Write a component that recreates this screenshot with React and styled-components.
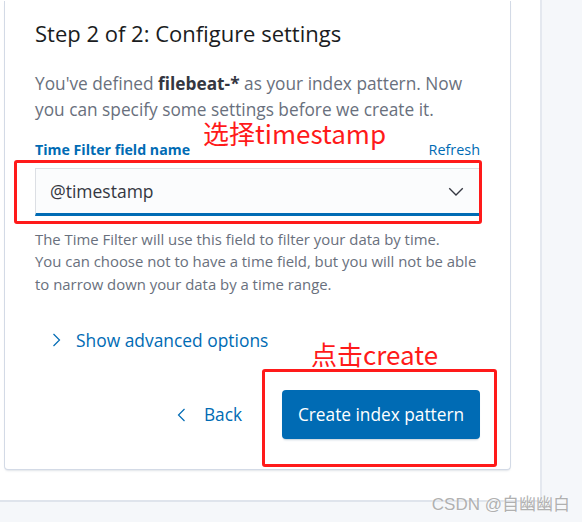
import React from "react";
import styled, { createGlobalStyle } from "styled-components";

const GlobalStyle = createGlobalStyle`
  html, body { margin: 0; padding: 0; }
  body {
    background: #f5f7fa;
    font-family: "Open Sans", "Noto Sans", sans-serif;
    -webkit-font-smoothing: antialiased;
  }
`;

const Page = styled.div`
  position: relative;
  width: 582px;
  height: 522px;
  overflow: hidden;
  background: #f5f7fa;
`;

const Panel = styled.div`
  width: 542px;
  height: 502px;
  box-sizing: border-box;
  background: #ffffff;
  border-right: 2px solid #e4e8ef;
  border-bottom: 2px solid #dfe4ec;
  padding: 0 31px 30px 4px;
  display: flex;
  flex-direction: column;
  justify-content: flex-end;
`;

const Card = styled.div`
  width: 507px;
  box-sizing: border-box;
  background: #fff;
  border: 1px solid #d3dae6;
  border-top: none;
  border-radius: 0 0 4px 4px;
  box-shadow: 0 2px 2px -1px rgba(152, 162, 179, 0.3);
  padding: 14px 30px 30px 30px;
  display: flex;
  flex-direction: column;
`;

const Title = styled.h2`
  margin: 0;
  font-size: 22px;
  line-height: 36px;
  font-weight: 500;
  color: #1a1c21;
`;

const Lead = styled.p`
  margin: 20px 0 0;
  font-size: 17.3px;
  line-height: 26px;
  color: #69707d;
  strong { color: #343741; font-weight: 700; }
`;

const LabelRow = styled.div`
  margin-top: 14px;
  display: flex;
  justify-content: space-between;
  align-items: baseline;
  height: 26px;
`;

const Label = styled.label`
  font-size: 14.2px;
  font-weight: 700;
  color: #006bb4;
  line-height: 26px;
`;

const LinkText = styled.span`
  font-size: 14.4px;
  color: #006bb4;
  line-height: 26px;
`;

const Select = styled.div`
  margin-top: 5px;
  height: 48px;
  box-sizing: border-box;
  background: #fbfcfd;
  border: 1px solid #dcdfe4;
  border-bottom: 3px solid #006bb4;
  display: flex;
  align-items: center;
  justify-content: space-between;
  padding: 0 14px 0 14px;
  font-size: 17.5px;
  color: #343741;
`;

const Help = styled.p`
  margin: 12px 0 0;
  font-size: 14.9px;
  line-height: 22.5px;
  color: #69707d;
`;

const Toggle = styled.div`
  margin: 32px 0 0 13px;
  display: flex;
  align-items: center;
  gap: 12px;
  font-size: 17.4px;
  line-height: 26px;
  color: #006bb4;
`;

const Footer = styled.div`
  margin-top: 37px;
  display: flex;
  justify-content: flex-end;
  align-items: center;
  gap: 40px;
`;

const EmptyButton = styled.div`
  display: flex;
  align-items: center;
  gap: 14px;
  font-size: 17.3px;
  color: #006bb4;
`;

const PrimaryButton = styled.div`
  width: 198px;
  height: 49px;
  box-sizing: border-box;
  background: #006bb4;
  border-radius: 4px;
  box-shadow: 0 2px 2px -1px rgba(54, 97, 126, 0.3);
  color: #fff;
  font-size: 17.3px;
  display: flex;
  align-items: center;
  justify-content: center;
`;

const RedBox = styled.div`
  position: absolute;
  box-sizing: border-box;
  border: 3px solid #ff1a1a;
  border-radius: 3px;
  pointer-events: none;
`;

const RedNote = styled.div`
  position: absolute;
  color: #ff1a1a;
  font-family: "Noto Sans CJK SC", "Open Sans", sans-serif;
  font-size: 26px;
  line-height: 22px;
  white-space: nowrap;
`;

const Watermark = styled.div`
  position: absolute;
  right: 12px;
  bottom: 7px;
  font-family: "Liberation Sans", "Noto Sans CJK SC", sans-serif;
  font-size: 17px;
  color: #b0b0b0;
  text-shadow: 0 0 2px #fff;
  white-space: nowrap;
`;

const Chevron = ({ dir, size = 16 }) => {
  const d = {
    down: "M2 5.5 L8 11.5 L14 5.5",
    right: "M5.5 2 L11.5 8 L5.5 14",
    left: "M10.5 2 L4.5 8 L10.5 14",
  }[dir];
  return (
    <svg width={size} height={size} viewBox="0 0 16 16" fill="none">
      <path d={d} stroke="currentColor" strokeWidth="1.2" />
    </svg>
  );
};

const Arrow = styled.span`
  display: inline-flex;
  color: ${(p) => p.$color || "#006bb4"};
`;

export default function App() {
  return (
    <>
      <GlobalStyle />
      <Page>
        <Panel>
          <Card>
            <Title>Step 2 of 2: Configure settings</Title>
            <Lead>
              You've defined <strong>filebeat-*</strong> as your index pattern. Now
              you can specify some settings before we create it.
            </Lead>
            <LabelRow>
              <Label>Time Filter field name</Label>
              <LinkText>Refresh</LinkText>
            </LabelRow>
            <Select>
              <span>@timestamp</span>
              <Arrow $color="#343741">
                <Chevron dir="down" size={18} />
              </Arrow>
            </Select>
            <Help>
              The Time Filter will use this field to filter your data by time.
              <br />
              You can choose not to have a time field, but you will not be able
              <br />
              to narrow down your data by a time range.
            </Help>
            <Toggle>
              <Arrow>
                <Chevron dir="right" />
              </Arrow>
              Show advanced options
            </Toggle>
            <Footer>
              <EmptyButton>
                <Arrow>
                  <Chevron dir="left" />
                </Arrow>
                Back
              </EmptyButton>
              <PrimaryButton>Create index pattern</PrimaryButton>
            </Footer>
          </Card>
        </Panel>
        <RedBox style={{ left: 14, top: 160, width: 468, height: 64 }} />
        <RedBox style={{ left: 262, top: 369, width: 235, height: 98 }} />
        <RedNote style={{ left: 203, top: 122 }}>选择timestamp</RedNote>
        <RedNote style={{ left: 311, top: 343 }}>点击create</RedNote>
        <Watermark>CSDN @自幽幽白</Watermark>
      </Page>
    </>
  );
}
